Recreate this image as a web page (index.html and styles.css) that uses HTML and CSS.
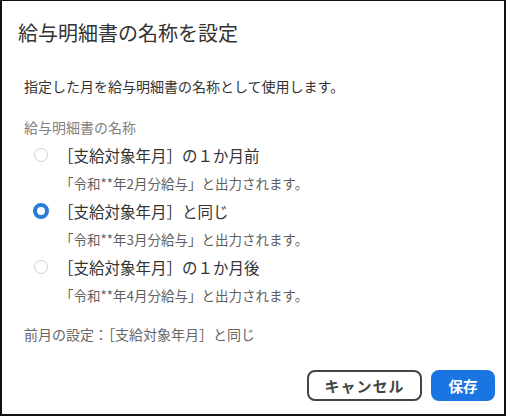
FILE: index.html
```html
<!DOCTYPE html>
<html>
	<head>
		<meta charset="UTF-8">
		<title>給与明細書の名称を設定</title>
		<link rel="stylesheet" href="styles.css">
	</head>
	<body>
		<div class="dialog">
			<h2 class="title">給与明細書の名称を設定</h2>
			<p class="desc">指定した月を給与明細書の名称として使用します。</p>

			<div class="field">
				<div class="field-label">給与明細書の名称</div>

				<label class="option first">
					<span class="radio"></span>
					<span class="option-text">［支給対象年月］の１か月前</span>
				</label>
				<div class="hint">「令和**年2月分給与」と出力されます。</div>

				<label class="option">
					<span class="radio checked"></span>
					<span class="option-text">［支給対象年月］と同じ</span>
				</label>
				<div class="hint">「令和**年3月分給与」と出力されます。</div>

				<label class="option">
					<span class="radio"></span>
					<span class="option-text">［支給対象年月］の１か月後</span>
				</label>
				<div class="hint">「令和**年4月分給与」と出力されます。</div>
			</div>

			<p class="prev">前月の設定：［支給対象年月］と同じ</p>

			<div class="actions">
				<button class="btn btn-cancel">キャンセル</button>
				<button class="btn btn-save">保存</button>
			</div>
		</div>
	</body>
</html>
```

FILE: styles.css
```css
	* { box-sizing: border-box; }
	body { margin: 0; background: #fff; font-family: "Noto Sans CJK JP", "Noto Sans", sans-serif; color: #333; }
	.dialog { width: 506px; height: 416px; border: 2px solid #111; border-top-width: 1px; padding: 0 0 0 22px; display: flex; flex-direction: column; }
	.title { margin: 18px 0 0 -6px; font-size: 20px; font-weight: 400; line-height: 28px; color: #333; }
	.desc { margin: 29px 0 0; font-size: 14px; line-height: 20px; color: #333; }
	.field { margin-top: 21px; }
	.field-label { font-size: 14px; line-height: 20px; color: #808080; }
	.option { display: flex; align-items: center; height: 26px; margin-top: 2px; }
	.option.first { margin-top: 5px; }
	.radio { width: 14px; height: 14px; border-radius: 50%; border: 1px solid #d2d2d2; margin-left: 10px; }
	.radio.checked { border: 4px solid #2a7ad8; background: #fff; width: 16px; height: 16px; margin-left: 9px; }
	.option-text { margin-left: 10px; font-size: 15.5px; color: #333; }
	.option .radio.checked + .option-text { margin-left: 9px; }
	.hint { margin: 2px 0 0 36px; font-size: 13.5px; line-height: 26px; color: #5f5f5f; }
	.prev { margin: 16px 0 0; font-size: 14px; line-height: 20px; color: #666; }
	.actions { display: flex; justify-content: flex-end; gap: 9px; margin-top: 26px; padding-right: 9px; }
	.btn { height: 31px; border-radius: 8px; font-family: inherit; font-size: 14.5px; font-weight: 700; cursor: pointer; }
	.btn-cancel { width: 115px; background: #fff; border: 2px solid #444; color: #444; font-size: 15px; letter-spacing: 1px; }
	.btn-save { width: 64px; background: #1a74e2; border: none; color: #fff; }
```
